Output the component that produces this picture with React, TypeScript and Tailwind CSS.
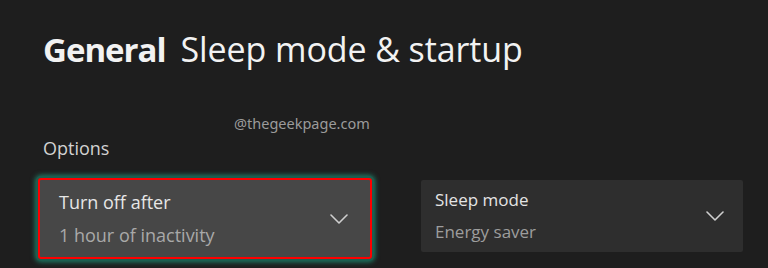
import React from "react";

function Chevron({ className }: { className?: string }) {
  return (
    <svg className={className} width="18" height="10" viewBox="0 0 18 10" fill="none">
      <polyline points="1,1 9,9 17,1" stroke="#cfcfcf" strokeWidth="1.6" strokeLinecap="round" strokeLinejoin="round" />
    </svg>
  );
}

export default function App() {
  return (
    <div
      className="relative w-[768px] h-[268px] overflow-hidden bg-[#1e1e1e] pl-[43px]"
      style={{ fontFamily: '"Open Sans", "Noto Sans", sans-serif' }}
    >
      <h1 className="flex h-[66px] items-baseline pt-[32px] text-[34px] leading-[34px] text-[#f2f2f2]">
        <span className="text-[33px] font-bold tracking-[-1px]">General</span>
        <span className="ml-[15px] font-normal tracking-[-0.1px]">Sleep mode &amp; startup</span>
      </h1>

      <div
        className="absolute left-[234px] top-[113px] text-[14.5px] leading-[20px] text-[#9b9b9b]"
        style={{ fontFamily: '"Noto Sans", sans-serif' }}
      >
        @thegeekpage.com
      </div>

      <div className="mt-[73px] text-[18px] leading-[18px] text-[#d2d2d2]">Options</div>

      <div className="mt-[21px] flex items-start">
        <div className="ml-[-5px] flex h-[81px] w-[334px] items-center justify-between rounded-[3px] border-2 border-[#ff0000] bg-[#474747] pl-[19px] pr-[22px] shadow-[0_0_0_2px_#1d5e50,0_0_5px_3px_#1f7f68]">
          <div className="flex flex-col">
            <span className="text-[18px] leading-[18px] text-[#e6e6e6]">Turn off after</span>
            <span className="mt-[15px] text-[18px] leading-[18px] text-[#a9a9a9]">1 hour of inactivity</span>
          </div>
          <Chevron />
        </div>

        <div className="ml-[49px] mt-[2px] flex h-[72px] w-[322px] items-center justify-between rounded-[2px] bg-[#2e2e2e] pl-[14px] pr-[19px]">
          <div className="flex flex-col">
            <span className="text-[17px] leading-[18px] text-[#e4e4e4]">Sleep mode</span>
            <span className="mt-[14px] text-[17px] leading-[18px] text-[#9d9d9d]">Energy saver</span>
          </div>
          <Chevron />
        </div>
      </div>
    </div>
  );
}
